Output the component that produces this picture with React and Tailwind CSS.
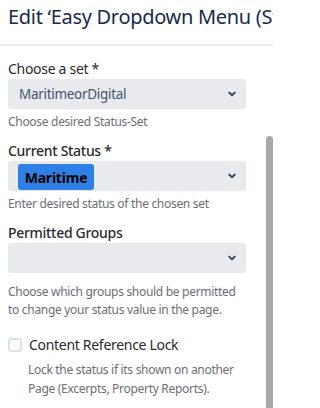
import React from "react";

function Chevron() {
  return (
    <svg width="10" height="10" viewBox="0 0 10 10" className="shrink-0">
      <path d="M2.2 3.6 L5 6.3 L7.8 3.6" fill="none" stroke="#344563" strokeWidth="2" strokeLinecap="round" strokeLinejoin="round" />
    </svg>
  );
}

function Select({ children }) {
  return (
    <div className="flex h-[30px] w-[238px] items-center justify-between rounded-[3px] bg-[#e9eaee] pl-[11px] pr-[9px]">
      <div className="flex h-full items-center">{children}</div>
      <Chevron />
    </div>
  );
}

export default function App() {
  return (
    <div
      className="relative h-[408px] w-[273px] overflow-hidden bg-white"
      style={{ fontFamily: '"Segoe UI", "Noto Sans", "Open Sans", sans-serif' }}
    >
      <div className="h-[46px] overflow-hidden border-b-2 border-[#ebecf0] px-2 pt-[3px]">
        <div className="whitespace-nowrap text-[20px] leading-[28px] tracking-[-0.3px] text-[#172b4d]">
          Edit ‘Easy Dropdown Menu (Status)’ Macro
        </div>
      </div>

      <div className="px-2 pt-[13px]">
        <div className="text-[14px] leading-[20px] tracking-[-0.3px] text-[#292a2e]">Choose a set *</div>
        <Select>
          <span className="text-[13.5px] tracking-[-0.3px] text-[#44546f]">MaritimeorDigital</span>
        </Select>
        <div className="mt-[5px] text-[12px] leading-[16px] tracking-[-0.3px] text-[#6b6e76]">Choose desired Status-Set</div>

        <div className="mt-[11px] text-[14px] font-medium leading-[20px] tracking-[-0.3px] text-[#292a2e]">Current Status *</div>
        <div className="flex h-[30px] w-[238px] items-center justify-between rounded-[3px] bg-[#e9eaee] pl-[10px] pr-[9px]">
          <span className="mt-[2px] flex h-[26px] w-[76px] items-center justify-center rounded-[3px] bg-[#2f80e4] text-[14px] font-bold tracking-[-0.2px] text-black">
            Maritime
          </span>
          <Chevron />
        </div>
        <div className="mt-[5px] text-[12px] leading-[16px] tracking-[-0.3px] text-[#6b6e76]">Enter desired status of the chosen set</div>

        <div className="mt-[11px] text-[14px] font-medium leading-[20px] tracking-[-0.3px] text-[#292a2e]">Permitted Groups</div>
        <Select />
        <div className="mt-[10px] w-[240px] text-[12px] leading-[18px] tracking-[-0.3px] text-[#6b6e76]">
          Choose which groups should be permitted to change your status value in the page.
        </div>

        <div className="mt-[16px] flex items-center gap-[7px]">
          <div className="h-[14px] w-[14px] rounded-[3px] border-2 border-[#dfe1e6] bg-[#fafbfc]" />
          <span className="text-[14px] leading-[20px] tracking-[-0.3px] text-[#292a2e]">Content Reference Lock</span>
        </div>
        <div className="mt-[5px] pl-[20px] text-[12px] leading-[19px] tracking-[-0.3px] text-[#6b6e76]">
          Lock the status if its shown on another
          <br />
          Page (Excerpts, Property Reports).
        </div>
      </div>

      <div className="absolute right-0 top-[136px] h-[272px] w-[7px] rounded-t-[4px] bg-[#a8a8a8]" />
    </div>
  );
}
